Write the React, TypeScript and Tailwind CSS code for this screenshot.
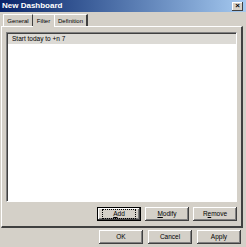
import React from "react";

const raised =
  "shadow-[inset_-1px_-1px_#404040,inset_1px_1px_#ffffff,inset_-2px_-2px_#808080,inset_2px_2px_#d4d0c8]";

function Btn({ children, def }: { children: React.ReactNode; def?: boolean }) {
  return (
    <button
      className={`w-[44px] h-[14px] bg-[#d4d0c8] text-[6.5px] leading-none text-black flex items-center justify-center ${
        def ? "border border-black shadow-[inset_-1px_-1px_#404040,inset_1px_1px_#ffffff,inset_-2px_-2px_#808080]" : raised
      }`}
    >
      {def ? (
        <span className="border border-dotted border-black px-[10px] py-[1px] leading-none">{children}</span>
      ) : (
        children
      )}
    </button>
  );
}

export default function App() {
  return (
    <div
      className="w-[246px] h-[247px] bg-[#d4d0c8] flex flex-col overflow-hidden"
      style={{ fontFamily: '"Liberation Sans", Arial, sans-serif' }}
    >
      {/* title bar */}
      <div className="h-[12px] bg-gradient-to-r from-[#0a246a] to-[#a6caf0] flex items-center justify-between pl-[2px] pr-[3px]">
        <span className="text-white font-bold text-[8px] leading-none">New Dashboard</span>
        <span className="w-[11px] h-[9px] bg-[#d4d0c8] flex items-center justify-center text-[8px] font-bold leading-none shadow-[inset_-1px_-1px_#404040,inset_1px_1px_#ffffff]">
          ×
        </span>
      </div>

      {/* tabs */}
      <div className="flex items-end pl-[3px] h-[13px] mt-[1px] text-[6px] leading-none">
        <div className="w-[30px] h-[12px] flex items-center justify-center border-l border-t border-white border-r border-r-[#404040]">
          General
        </div>
        <div className="w-[21px] h-[13px] flex items-center justify-center border-t border-white bg-[#d4d0c8] relative top-[1px] z-10">
          Filter
        </div>
        <div className="w-[34px] h-[12px] flex items-center justify-center border-l border-t border-white border-r-2 border-r-[#404040]">
          Definition
        </div>
      </div>

      {/* panel */}
      <div className="mx-[1px] w-[242px] h-[202px] border-l border-t border-white border-r-2 border-b-2 border-r-[#404040] border-b-[#404040] flex flex-col px-[4px] pt-[5px]">
        <div className="h-[170px] bg-white border-l border-t border-[#808080] border-r border-b border-r-[#ffffff] border-b-[#ffffff] shadow-[inset_1px_1px_#404040]">
          <div className="mt-[1px] ml-[1px] h-[10px] bg-[#dcdad5] flex items-center pl-[4px] text-[6.5px] leading-none">
            Start today to +n 7
          </div>
        </div>
        <div className="flex justify-end gap-[4px] mt-[5px]">
          <Btn def>
            <u>A</u>dd
          </Btn>
          <Btn>
            <u>M</u>odify
          </Btn>
          <Btn>
            R<u>e</u>move
          </Btn>
        </div>
      </div>

      {/* bottom buttons */}
      <div className="flex justify-end gap-[5px] pr-[5px] mt-[2px]">
        <Btn>OK</Btn>
        <Btn>Cancel</Btn>
        <Btn>Apply</Btn>
      </div>
    </div>
  );
}
